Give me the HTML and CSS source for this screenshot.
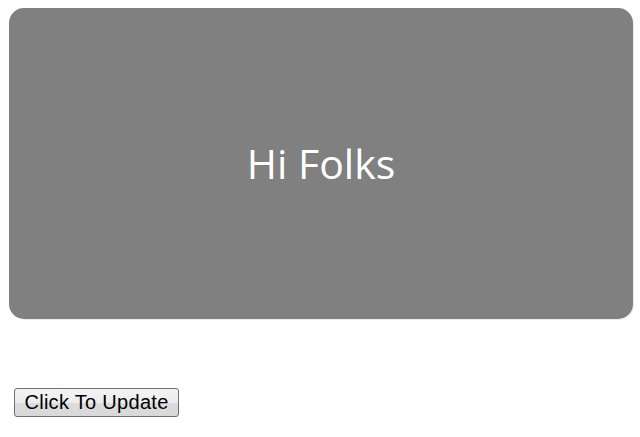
FILE: index.html
```html
<!DOCTYPE html>
<html>
<head>
<meta charset="utf-8">
<link rel="stylesheet" href="styles.css">
</head>
<body>
<div class="page">
  <div class="panel"><span class="greeting">Hi Folks</span></div>
  <div class="actions"><button class="update-btn">Click To Update</button></div>
</div>
</body>
</html>
```
FILE: styles.css
```css
html, body {
  margin: 0;
  padding: 0;
  background: #ffffff;
}
.page {
  display: flex;
  flex-direction: column;
  padding: 8px 7px 0 9px;
}
.panel {
  height: 311px;
  background: #808080;
  border-radius: 15px;
  display: flex;
  align-items: center;
  justify-content: center;
  box-shadow: 1px 1px 1px rgba(0,0,0,0.08);
}
.greeting {
  font-family: "Open Sans", "Noto Sans", sans-serif;
  font-size: 41px;
  color: #ffffff;
  line-height: 1;
}
.actions {
  display: flex;
  padding: 69px 0 0 5px;
}
.update-btn {
  box-sizing: border-box;
  width: 165px;
  height: 29px;
  padding: 0 0 1px 0;
  font-family: "Liberation Sans", Arial, sans-serif;
  font-size: 20px;
  letter-spacing: 0.3px;
  color: #000000;
  background: linear-gradient(#f3f3f3 0%, #ececec 50%, #dcdcdc 51%, #d8d8d8 100%);
  border: 1px solid #707070;
  border-radius: 3px;
}
```
